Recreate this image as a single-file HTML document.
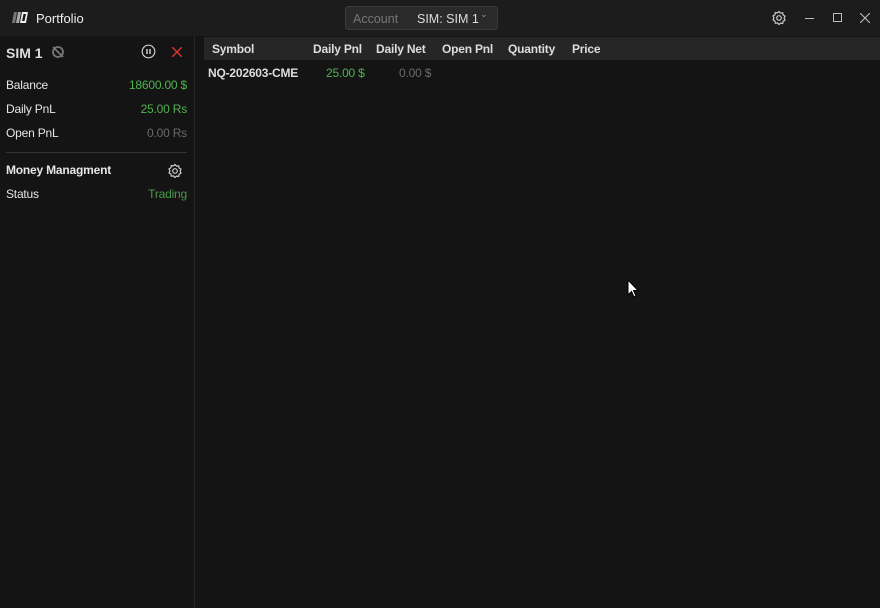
<!DOCTYPE html>
<html><head><meta charset="utf-8"><style>
*{margin:0;padding:0;box-sizing:border-box}
body{width:880px;height:608px;background:#141414;font-family:"Liberation Sans",sans-serif;color:#e6e6e6;position:relative;overflow:hidden;font-size:12px}
.abs{position:absolute}
#title{left:0;top:0;width:880px;height:36px;background:#1c1c1c}
#left{left:0;top:36px;width:195px;height:572px;background:#141414;border-right:1px solid #262626}
.row{position:absolute;left:6px;width:181px;display:flex;justify-content:space-between;font-size:12px;letter-spacing:-0.2px}
.g{color:#4fb34f}.gr{color:#6a6a6a}
#th{left:204px;top:37px;width:676px;height:23px;background:#262626;font-weight:bold;font-size:12px;color:#ddd;letter-spacing:-0.2px}
#th span,.td{position:absolute;top:5px}
</style></head><body>
<div id="title" class="abs">
 <svg class="abs" style="left:12px;top:12px" width="16" height="11" viewBox="0 0 16 11">
  <polygon points="2,0 5,0 3,11 0,11" fill="#777"/><polygon points="6,0 9,0 7,11 4,11" fill="#aaa"/><polygon points="10,0 16,0 14,11 8,11" fill="#eee"/><polygon points="11.5,2 14,2 12.5,9 10,9" fill="#1c1c1c"/>
 </svg>
 <div class="abs" style="left:36px;top:11px;font-size:13px;color:#eee">Portfolio</div>
 <div class="abs" style="left:345px;top:6px;width:153px;height:24px;background:#2a2a2a;border:1px solid #3a3a3a;border-radius:3px">
  <span class="abs" style="left:7px;top:5px;color:#777;font-size:12.5px">Account</span>
  <span class="abs" style="left:71px;top:5px;color:#ddd;font-size:12.5px">SIM: SIM 1</span>
  <span class="abs" style="left:134px;top:2px;color:#999;font-size:9px">&#8964;</span>
 </div>
 <svg class="abs" style="left:771px;top:10px" width="16" height="16" viewBox="0 0 16 16" fill="none" stroke="#ccc" stroke-width="1.2"><path d="M8 1.5l1.5 1.6 2.2-.3.4 2.2 1.9 1.1-.9 2 .9 2-1.9 1.1-.4 2.2-2.2-.3L8 14.5l-1.5-1.6-2.2.3-.4-2.2-1.9-1.1.9-2-.9-2 1.9-1.1.4-2.2 2.2.3z"/><circle cx="8" cy="8" r="2.3"/></svg>
 <div class="abs" style="left:805px;top:18px;width:9px;height:1px;background:#bbb"></div>
 <div class="abs" style="left:833px;top:13px;width:9px;height:9px;border:1px solid #bbb"></div>
 <svg class="abs" style="left:860px;top:13px" width="10" height="10" viewBox="0 0 10 10" stroke="#bbb" stroke-width="1.1"><path d="M0 0L10 10M10 0L0 10"/></svg>
</div>
<div id="left" class="abs">
 <div class="abs" style="left:6px;top:9px;font-size:14px;font-weight:bold;color:#ddd">SIM 1</div>
 <svg class="abs" style="left:51px;top:9px" width="14" height="14" viewBox="0 0 14 14" fill="none" stroke="#777" stroke-width="1.8"><circle cx="7" cy="7" r="5"/><path d="M2 2L12 12"/></svg>
 <svg class="abs" style="left:141px;top:8px" width="15" height="15" viewBox="0 0 15 15" fill="none" stroke="#ccc" stroke-width="1.2"><circle cx="7.5" cy="7.5" r="6.3"/><path d="M6 5v5M9 5v5" stroke-width="1.5"/></svg>
 <svg class="abs" style="left:172px;top:11px" width="10" height="10" viewBox="0 0 10 10" stroke="#d33" stroke-width="1.4"><path d="M0 0L10 10M10 0L0 10"/></svg>
 <div class="row" style="top:42px"><span>Balance</span><span class="g">18600.00 $</span></div>
 <div class="row" style="top:66px"><span>Daily PnL</span><span class="g">25.00 Rs</span></div>
 <div class="row" style="top:90px"><span>Open PnL</span><span class="gr">0.00 Rs</span></div>
 <div class="abs" style="left:6px;top:116px;width:181px;height:1px;background:#333"></div>
 <div class="row" style="top:127px;font-weight:bold"><span>Money Managment</span></div>
 <svg class="abs" style="left:167px;top:127px" width="16" height="16" viewBox="0 0 16 16" fill="none" stroke="#ccc" stroke-width="1.2"><path d="M8 1.5l1.5 1.6 2.2-.3.4 2.2 1.9 1.1-.9 2 .9 2-1.9 1.1-.4 2.2-2.2-.3L8 14.5l-1.5-1.6-2.2.3-.4-2.2-1.9-1.1.9-2-.9-2 1.9-1.1.4-2.2 2.2.3z"/><circle cx="8" cy="8" r="2.3"/></svg>
 <div class="row" style="top:151px"><span>Status</span><span style="color:#4a9a4a">Trading</span></div>
</div>
<div id="th" class="abs">
 <span style="left:8px">Symbol</span><span style="left:109px">Daily Pnl</span><span style="left:172px">Daily Net</span><span style="left:238px">Open Pnl</span><span style="left:304px">Quantity</span><span style="left:368px">Price</span>
</div>
<div class="abs" style="left:208px;top:66px;font-weight:bold;color:#ddd;letter-spacing:-0.2px">NQ-202603-CME</div>
<div class="abs g" style="left:326px;top:66px;letter-spacing:-0.2px">25.00 $</div>
<div class="abs gr" style="left:399px;top:66px;letter-spacing:-0.2px">0.00 $</div>
<svg class="abs" style="left:627px;top:279px" width="12" height="19" viewBox="0 0 12 19"><path d="M1 1v15l3.5-3.5 2.5 5.5 2-1-2.5-5.5H11z" fill="#fff" stroke="#000" stroke-width="1"/></svg>
</body></html>
